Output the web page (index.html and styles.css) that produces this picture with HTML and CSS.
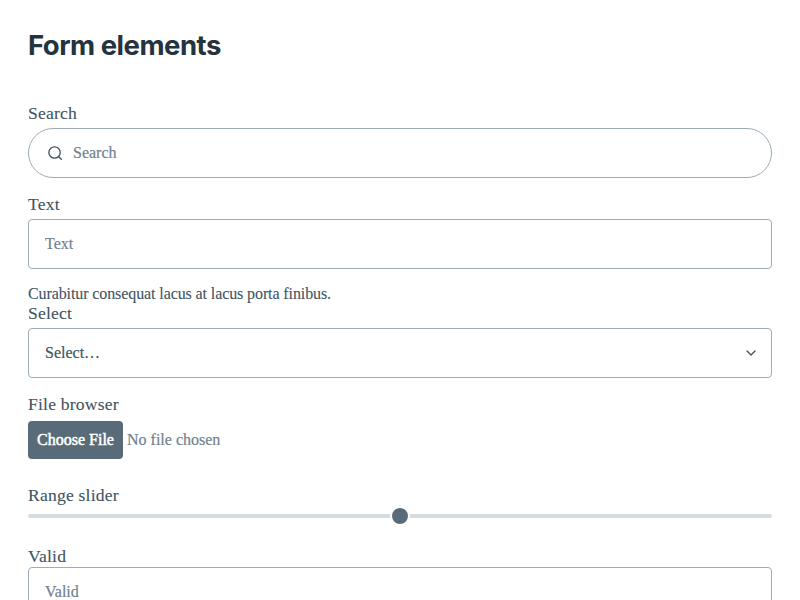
FILE: index.html
```html
<!DOCTYPE html>
<html lang="en">
<head>
<meta charset="utf-8">
<title>Form elements</title>
<link rel="stylesheet" href="styles.css">
</head>
<body>
<main class="container">
  <h2>Form elements</h2>
  <form>
    <div class="field">
      <label for="search">Search</label>
      <div class="control search">
        <svg width="16" height="16" viewBox="0 0 24 24"><circle cx="11.3" cy="11.3" r="8.5"/><line x1="21.5" y1="21.5" x2="17.3" y2="17.3"/></svg>
        <input id="search" type="text" placeholder="Search">
      </div>
    </div>
    <div class="field text">
      <label for="text">Text</label>
      <div class="control"><input id="text" type="text" placeholder="Text"></div>
      <small>Curabitur consequat lacus at lacus porta finibus.</small>
    </div>
    <div class="field">
      <label>Select</label>
      <div class="control select"><span>Select…</span>
        <svg width="16" height="16" viewBox="0 0 24 24"><polyline points="6 9 12 15 18 9"/></svg>
      </div>
    </div>
    <div class="field file">
      <label>File browser</label>
      <div class="file-row"><button type="button">Choose File</button><span>No file chosen</span></div>
    </div>
    <div class="field range">
      <label>Range slider</label>
      <div class="track"><span class="thumb"></span></div>
    </div>
    <div class="field valid">
      <label for="valid">Valid</label>
      <div class="control"><input id="valid" type="text" placeholder="Valid"></div>
    </div>
  </form>
</main>
</body>
</html>
```
FILE: styles.css
```css
* { box-sizing: border-box; }
html { overflow: hidden; }
body { margin: 0; height: 600px; overflow: hidden; background: #fff; color: #415462; font: 16px/24px "Liberation Serif", serif; }
.container { height: 600px; padding: 0 28px; overflow: hidden; }
h2 { margin: 0; padding-top: 27px; height: 104px; font: 700 27.5px/36px Inter, sans-serif; letter-spacing: -0.5px; color: #24333e; }
.field { margin-bottom: 17px; }
label { display: block; height: 24px; line-height: 18px; font-size: 17.6px; letter-spacing: 0.2px; -webkit-text-stroke: 0.1px; }
.control { display: flex; align-items: center; height: 50px; padding: 0 16px; border: 1px solid #9cadb9; border-radius: 4px; }
.control input { flex: 1; min-width: 0; padding: 0; border: 0; outline: 0; background: none; font: inherit; color: inherit; }
.control, .file-row { -webkit-text-stroke: 0.2px; }
.control input::placeholder { color: #70828f; opacity: 1; }
.control svg { flex: none; fill: none; stroke: #415462; stroke-width: 2; stroke-linecap: round; stroke-linejoin: round; }
.search { border-radius: 25px; padding-left: 18px; gap: 10px; }
small { display: block; padding-top: 15px; font-size: 16px; line-height: 20px; letter-spacing: -0.1px; -webkit-text-stroke: 0.1px; }
.text { margin-bottom: 0; }
.select { justify-content: space-between; padding-right: 12px; }
.file { margin-bottom: 27px; }
.file label { height: 26px; }
.file-row { display: flex; align-items: center; gap: 4px; color: #70828f; }
.file-row button { width: 95px; height: 38px; padding: 0; border: 0; border-radius: 4px; background: #596b78; color: #fff; font: inherit; -webkit-text-stroke: 0.5px; }
.range { margin-bottom: 29px; }
.range label { height: 28px; }
.valid label { height: 20px; }
.track { height: 4px; display: flex; align-items: center; justify-content: center; background: #d5dce2; border-radius: 4px; }
.thumb { flex: none; width: 20px; height: 20px; border: 2px solid #fff; border-radius: 50%; background: #596b78; }
```
